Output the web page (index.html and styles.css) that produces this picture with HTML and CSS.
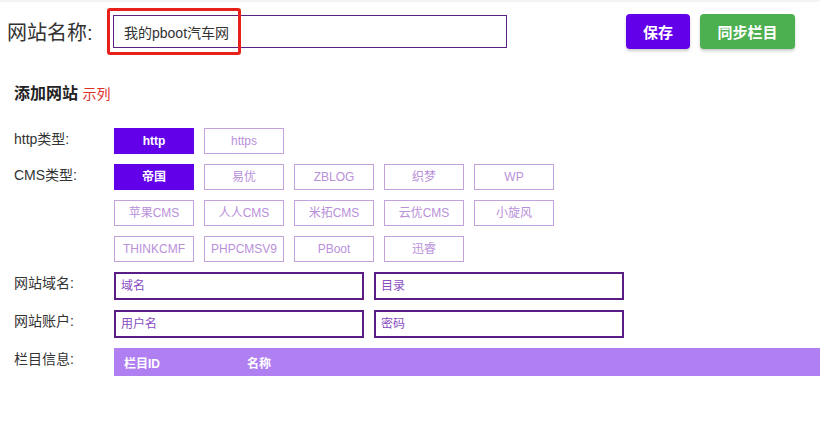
FILE: index.html
```html
<!DOCTYPE html>
<html lang="zh-CN">
<head>
  <meta charset="UTF-8">
  <meta name="viewport" content="width=device-width, initial-scale=1.0">
  <title>添加网站</title>
  <link rel="stylesheet" href="styles.css">
</head>
<body>

  <div class="topbar">
    <label class="site-label" for="siteName">网站名称:</label>
    <div class="name-wrap">
      <input type="text" id="siteName" class="name-input" value="我的pboot汽车网">
      <span class="mark"></span>
    </div>
    <div class="actions">
      <button type="button" class="btn btn-save">保存</button>
      <button type="button" class="btn btn-sync">同步栏目</button>
    </div>
  </div>

  <div class="panel">
    <h3 class="panel-title">添加网站 <span class="demo">示列</span></h3>

    <div class="row">
      <label class="row-label">http类型:</label>
      <div class="options">
        <span class="opt active">http</span>
        <span class="opt">https</span>
      </div>
    </div>

    <div class="row">
      <label class="row-label">CMS类型:</label>
      <div class="options">
        <span class="opt active">帝国</span>
        <span class="opt">易优</span>
        <span class="opt">ZBLOG</span>
        <span class="opt">织梦</span>
        <span class="opt">WP</span>
        <span class="opt">苹果CMS</span>
        <span class="opt">人人CMS</span>
        <span class="opt">米拓CMS</span>
        <span class="opt">云优CMS</span>
        <span class="opt">小旋风</span>
        <span class="opt">THINKCMF</span>
        <span class="opt">PHPCMSV9</span>
        <span class="opt">PBoot</span>
        <span class="opt">迅睿</span>
      </div>
    </div>

    <div class="row">
      <label class="row-label">网站域名:</label>
      <div class="fields">
        <input type="text" class="field" placeholder="域名">
        <input type="text" class="field" placeholder="目录">
      </div>
    </div>

    <div class="row">
      <label class="row-label">网站账户:</label>
      <div class="fields">
        <input type="text" class="field" placeholder="用户名">
        <input type="password" class="field" placeholder="密码">
      </div>
    </div>

    <div class="row">
      <label class="row-label">栏目信息:</label>
      <table class="cate-table">
        <tr>
          <th class="col-id">栏目ID</th>
          <th>名称</th>
        </tr>
      </table>
    </div>
  </div>

</body>
</html>
```

FILE: styles.css
```css
body {
  margin: 0;
  font-family: "Liberation Sans", "Noto Sans CJK SC", sans-serif;
  color: #333;
  background-color: #fff;
  border-top: 2px solid #f4f4f4;
}

.topbar {
  display: flex;
  align-items: center;
  padding: 12px 25px 0 7px;
}

.site-label {
  width: 106px;
  font-size: 20px;
  color: #333;
}

.name-wrap {
  position: relative;
}

.name-input {
  width: 394px;
  height: 33px;
  box-sizing: border-box;
  border: 1px solid #5c2183;
  padding: 0 10px;
  font-family: inherit;
  font-size: 14px;
  color: #333;
  outline: none;
}

/* red highlight drawn over the input */
.mark {
  position: absolute;
  left: -6px;
  top: -7px;
  width: 134px;
  height: 47px;
  box-sizing: border-box;
  border: 3px solid #e8201c;
  border-radius: 3px;
}

.actions {
  display: flex;
  gap: 10px;
  margin-left: auto;
}

.btn {
  height: 35px;
  border: none;
  border-radius: 4px;
  color: #fff;
  font-family: inherit;
  font-size: 15px;
  font-weight: bold;
  cursor: pointer;
  box-shadow: 0 2px 3px rgba(0, 0, 0, 0.2);
}

.btn-save {
  width: 64px;
  background-color: #6200ea;
}

.btn-sync {
  width: 95px;
  background-color: #4caf50;
}

.panel {
  padding: 0 0 0 14px;
}

.panel-title {
  margin: 35px 0 24px;
  font-size: 16px;
  line-height: 20px;
  font-weight: bold;
  color: #222;
}

.demo {
  font-size: 14px;
  font-weight: normal;
  color: #e0302a;
}

.row {
  display: flex;
  margin-bottom: 10px;
}

.row-label {
  width: 100px;
  flex-shrink: 0;
  font-size: 14px;
  line-height: 20px;
  padding-top: 1px;
  color: #333;
}

.options {
  display: flex;
  flex-wrap: wrap;
  gap: 10px;
  width: 450px;
}

.opt {
  width: 80px;
  height: 26px;
  box-sizing: border-box;
  border: 1px solid #c4a2dc;
  font-size: 12px;
  line-height: 24px;
  text-align: center;
  color: #b990da;
}

.opt.active {
  background-color: #6200ea;
  border-color: #6200ea;
  color: #fff;
  font-weight: bold;
}

.fields {
  display: flex;
  gap: 10px;
}

.field {
  width: 250px;
  height: 28px;
  box-sizing: border-box;
  border: 2px solid #5a1d86;
  padding: 0 5px;
  font-family: inherit;
  font-size: 12px;
  outline: none;
}

.field::placeholder {
  color: #8a4cc2;
}

.cate-table {
  flex: 1;
  border-collapse: collapse;
  background-color: #b07ff2;
}

.cate-table th {
  height: 28px;
  padding: 0 10px;
  text-align: left;
  font-size: 12px;
  color: #fff;
}

.cate-table .col-id {
  width: 103px;
}
```
